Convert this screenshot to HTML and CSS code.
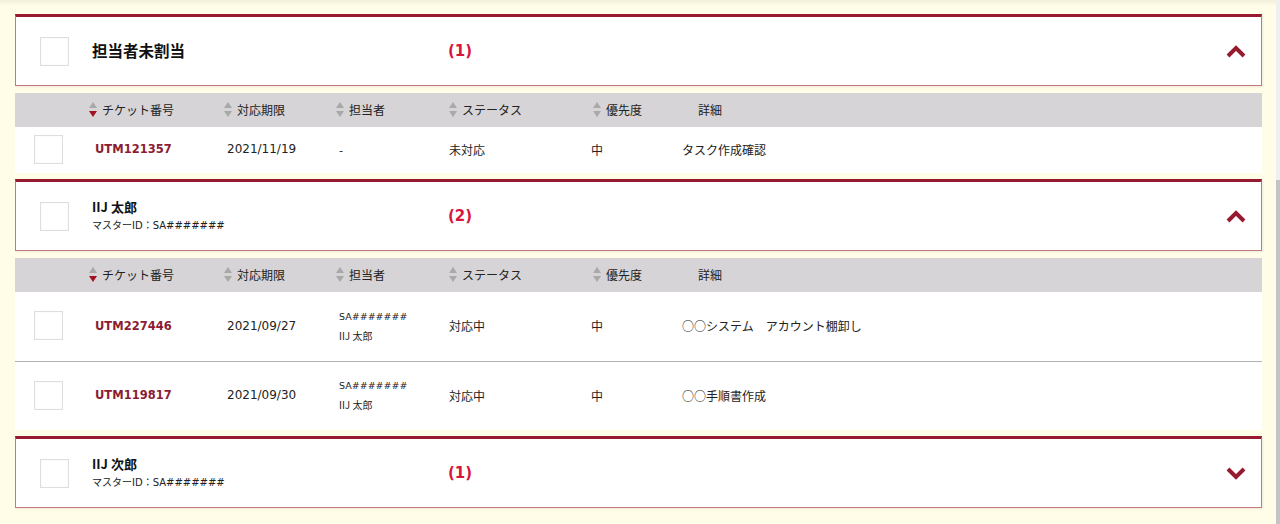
FILE: index.html
```html
<!DOCTYPE html>
<html lang="ja">
<head>
    <meta charset="UTF-8">
    <meta name="viewport" content="width=device-width, initial-scale=1.0">
    <title>チケット一覧</title>
    <link rel="stylesheet" href="styles.css">
</head>
<body>
    <div class="page">
        <main class="list">

            <!-- 担当者未割当 -->
            <section class="group">
                <div class="group-head">
                    <span class="check"></span>
                    <div class="owner">
                        <div class="owner-name big">担当者未割当</div>
                    </div>
                    <div class="count">(1)</div>
                    <svg class="chev" width="20" height="13" viewBox="0 0 20 13">
                        <polyline points="2,11 10,3 18,11" fill="none" stroke="#971a30" stroke-width="4"/>
                    </svg>
                </div>
                <div class="table">
                    <div class="thead">
                        <div></div>
                        <div class="th"><span class="sort desc"></span>チケット番号</div>
                        <div class="th"><span class="sort"></span>対応期限</div>
                        <div class="th"><span class="sort"></span>担当者</div>
                        <div class="th"><span class="sort"></span>ステータス</div>
                        <div class="th th-pri"><span class="sort"></span>優先度</div>
                        <div class="th th-detail">詳細</div>
                    </div>
                    <div class="row">
                        <div><span class="check small"></span></div>
                        <div class="td ticket">UTM121357</div>
                        <div class="td date">2021/11/19</div>
                        <div class="td person">-</div>
                        <div class="td">未対応</div>
                        <div class="td">中</div>
                        <div class="td">タスク作成確認</div>
                    </div>
                </div>
            </section>

            <!-- IIJ 太郎 -->
            <section class="group">
                <div class="group-head">
                    <span class="check"></span>
                    <div class="owner">
                        <div class="owner-name">IIJ 太郎</div>
                        <div class="owner-id">マスターID：SA#######</div>
                    </div>
                    <div class="count">(2)</div>
                    <svg class="chev" width="20" height="13" viewBox="0 0 20 13">
                        <polyline points="2,11 10,3 18,11" fill="none" stroke="#971a30" stroke-width="4"/>
                    </svg>
                </div>
                <div class="table">
                    <div class="thead">
                        <div></div>
                        <div class="th"><span class="sort desc"></span>チケット番号</div>
                        <div class="th"><span class="sort"></span>対応期限</div>
                        <div class="th"><span class="sort"></span>担当者</div>
                        <div class="th"><span class="sort"></span>ステータス</div>
                        <div class="th th-pri"><span class="sort"></span>優先度</div>
                        <div class="th th-detail">詳細</div>
                    </div>
                    <div class="row tall">
                        <div><span class="check small"></span></div>
                        <div class="td ticket">UTM227446</div>
                        <div class="td date">2021/09/27</div>
                        <div class="td person">
                            <div class="pid">SA#######</div>
                            <div class="pname">IIJ 太郎</div>
                        </div>
                        <div class="td">対応中</div>
                        <div class="td">中</div>
                        <div class="td">○○システム　アカウント棚卸し</div>
                    </div>
                    <div class="row tall">
                        <div><span class="check small"></span></div>
                        <div class="td ticket">UTM119817</div>
                        <div class="td date">2021/09/30</div>
                        <div class="td person">
                            <div class="pid">SA#######</div>
                            <div class="pname">IIJ 太郎</div>
                        </div>
                        <div class="td">対応中</div>
                        <div class="td">中</div>
                        <div class="td">○○手順書作成</div>
                    </div>
                </div>
            </section>

            <!-- IIJ 次郎 (closed) -->
            <section class="group">
                <div class="group-head">
                    <span class="check"></span>
                    <div class="owner">
                        <div class="owner-name">IIJ 次郎</div>
                        <div class="owner-id">マスターID：SA#######</div>
                    </div>
                    <div class="count">(1)</div>
                    <svg class="chev" width="20" height="13" viewBox="0 0 20 13">
                        <polyline points="2,2 10,10 18,2" fill="none" stroke="#971a30" stroke-width="4"/>
                    </svg>
                </div>
            </section>

        </main>
        <div class="scrollbar"><div class="thumb"></div></div>
    </div>
</body>
</html>
```

FILE: styles.css
```css
:root {
    --cream: #fffde8;
    --wine: #971a30;
    --wine-light: #c67880;
    --crimson: #d7153d;
    --head-grey: #d6d4d6;
    --text: #222222;
}

* {
    margin: 0;
    padding: 0;
    box-sizing: border-box;
}

body {
    font-family: "DejaVu Sans", "Noto Sans CJK JP", sans-serif;
    font-size: 12px;
    color: var(--text);
    background: linear-gradient(#f2f0dc, var(--cream) 6px);
    height: 524px;
    overflow: hidden;
}

.page {
    display: flex;
    height: 100%;
}

.list {
    flex: 1;
    padding: 14px 14px 0 15px;
}

.group {
    margin-bottom: 6px;
}

/* group header */
.group-head {
    display: flex;
    align-items: center;
    height: 72px;
    background: #ffffff;
    border: 1px solid var(--wine-light);
    border-top: 3px solid var(--wine);
    padding: 0 15px 0 24px;
    box-shadow: 1px 1px 2px rgba(0, 0, 0, 0.08);
}

.check {
    display: block;
    width: 29px;
    height: 29px;
    border: 1px solid #dedede;
    background: #ffffff;
    box-shadow: inset 0 0 2px rgba(0, 0, 0, 0.06);
    flex-shrink: 0;
}

.check.small {
    margin-left: 19px;
}

.owner {
    width: 356px;
    margin-left: 23px;
    flex-shrink: 0;
}

.owner-name {
    font-family: "Noto Sans CJK JP", sans-serif;
    font-weight: bold;
    font-size: 13px;
    line-height: 18px;
    color: #111111;
}

.owner-name.big {
    font-size: 15.5px;
    margin-top: -2px;
}

.owner-id {
    font-size: 10px;
    line-height: 16px;
    margin-top: 2px;
}

.count {
    flex: 1;
    font-weight: bold;
    font-size: 15px;
    color: var(--crimson);
}

.chev {
    display: block;
}

/* table */
.table {
    margin-top: 7px;
    background: #ffffff;
}

.thead,
.row {
    display: grid;
    grid-template-columns: 74px 135px 112px 113px 142px 91px 1fr;
    align-items: center;
}

.thead {
    height: 34px;
    padding-bottom: 2px;
    background: var(--head-grey);
}

.th {
    display: flex;
    align-items: center;
    font-family: "Noto Sans CJK JP", sans-serif;
    font-size: 12px;
}

.th-pri {
    padding-left: 2px;
}

.th-detail {
    padding-left: 16px;
}

.sort {
    position: relative;
    width: 9px;
    height: 17px;
    margin-right: 4px;
    flex-shrink: 0;
}

.sort::before,
.sort::after {
    content: "";
    position: absolute;
    left: 0;
    border-left: 4.5px solid transparent;
    border-right: 4.5px solid transparent;
}

.sort::before {
    top: 1px;
    border-bottom: 6px solid #a9a9a9;
}

.sort::after {
    bottom: 1px;
    border-top: 6px solid #a9a9a9;
}

.sort.desc::after {
    border-top-color: #a3101f;
}

.row {
    height: 46px;
    padding-bottom: 2px;
}

.row.tall {
    height: 69px;
}

.row.tall + .row.tall {
    border-top: 1px solid #b0b0b0;
}

.td {
    font-family: "Noto Sans CJK JP", sans-serif;
    font-size: 12px;
}

.ticket {
    font-family: "DejaVu Sans", sans-serif;
    font-weight: bold;
    font-size: 11.5px;
    color: #8c1c34;
    padding-left: 6px;
}

.date {
    font-family: "DejaVu Sans", sans-serif;
    padding-left: 3px;
}

.person {
    padding-left: 3px;
}

.pid {
    font-family: "DejaVu Sans", sans-serif;
    font-size: 9.5px;
    line-height: 19px;
}

.pname {
    font-size: 10px;
    line-height: 19px;
}

/* page scrollbar */
.scrollbar {
    width: 4px;
    background: #efefef;
    display: flex;
    flex-direction: column;
}

.thumb {
    margin-top: 180px;
    flex: 1;
    background: #c4c4c4;
}
```
